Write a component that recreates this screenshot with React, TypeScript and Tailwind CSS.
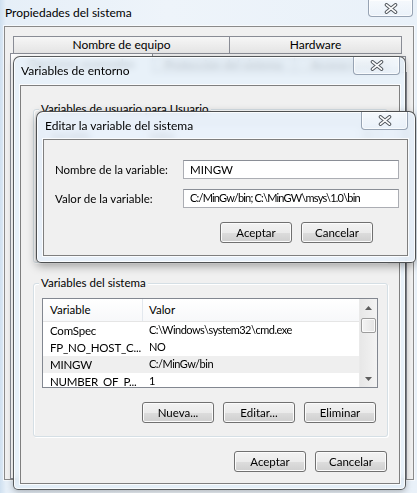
import React from "react";

function CloseGlyph() {
  return (
    <svg width="14" height="11" viewBox="0 0 14 11">
      <path d="M2.5 1.8 L11.5 9.2 M11.5 1.8 L2.5 9.2" stroke="#555a60" strokeWidth="3.6" strokeLinecap="round" fill="none" />
      <path d="M2.5 1.8 L11.5 9.2 M11.5 1.8 L2.5 9.2" stroke="#ffffff" strokeWidth="1.6" strokeLinecap="round" fill="none" />
    </svg>
  );
}

function CloseBtn({ className }: { className: string }) {
  return (
    <div
      className={
        "absolute flex items-center justify-center border border-t-0 border-[#97a3b3] rounded-b-[4px] bg-[linear-gradient(to_bottom,rgba(255,255,255,0.55),rgba(235,242,250,0.6))] shadow-[inset_0_0_0_1px_rgba(255,255,255,0.7)] " +
        className
      }
    >
      <CloseGlyph />
    </div>
  );
}

function Btn({ children }: { children: React.ReactNode }) {
  return (
    <div className="w-[72px] h-[21px] flex items-center justify-center rounded-[3px] border border-[#707070] bg-[linear-gradient(to_bottom,#f2f2f2_0%,#ebebeb_50%,#dddddd_51%,#cfcfcf_100%)] shadow-[inset_0_0_0_1px_#fbfbfb] text-[11.5px] leading-none text-black">
      {children}
    </div>
  );
}

function GroupBox({ label, children, className }: { label: string; children?: React.ReactNode; className?: string }) {
  return (
    <div className={"relative border border-[#d5dfe5] rounded-[3px] shadow-[inset_1px_1px_0_#ffffff,1px_1px_0_#ffffff] " + (className || "")}>
      <span className="absolute -top-[9px] left-[5px] px-[2px] bg-[#f0f0f0] leading-[16px] text-[11.5px] text-black">{label}</span>
      {children}
    </div>
  );
}

function ListView({ rows, selected, thumbTop }: { rows: [string, string][]; selected?: number; thumbTop: number }) {
  return (
    <div className="w-[336px] h-[90px] border border-[#828790] bg-white flex overflow-hidden">
      <div className="flex-1 flex flex-col overflow-hidden">
        <div className="h-[23px] shrink-0 flex items-center bg-[linear-gradient(to_bottom,#ffffff,#f7f8fa)] border-b border-[#e5e5e5] text-[11.5px]">
          <div className="w-[100px] h-full flex items-center pl-[7px] border-r border-[#e3e8ee]">Variable</div>
          <div className="flex-1 h-full flex items-center pl-[6px]">Valor</div>
        </div>
        {rows.map((r, i) => (
          <div key={i} className={"h-[17px] shrink-0 flex items-center text-[11.5px] " + (i === selected ? "bg-[#efefef]" : "")}>
            <div className="w-[100px] shrink-0 pl-[7px] whitespace-nowrap overflow-hidden tracking-[-0.2px]">{r[0]}</div>
            <div className="pl-[6px] whitespace-nowrap text-[11px] tracking-[-0.5px]">{r[1]}</div>
          </div>
        ))}
      </div>
      <div className="w-[18px] h-full bg-[linear-gradient(to_right,#e7e7e7,#f3f3f3)] border-l border-[#eaeaea] flex flex-col items-center">
        <div className="h-[17px] w-full flex items-center justify-center">
          <svg width="7" height="4" viewBox="0 0 7 4"><path d="M0 4 L3.5 0 L7 4 Z" fill="#5d5d5d" /></svg>
        </div>
        <div style={{ marginTop: thumbTop }} className="w-[15px] h-[15px] rounded-[2px] border border-[#9c9c9c] bg-[linear-gradient(to_right,#f3f3f3,#e4e4e4)] shadow-[inset_0_0_0_1px_#fafafa]" />
        <div className="flex-1" />
        <div className="h-[17px] w-full flex items-center justify-center">
          <svg width="7" height="4" viewBox="0 0 7 4"><path d="M0 0 L3.5 4 L7 0 Z" fill="#5d5d5d" /></svg>
        </div>
      </div>
    </div>
  );
}

export default function App() {
  return (
    <div className="relative w-[417px] h-[493px] overflow-hidden bg-[linear-gradient(to_right,#cfe0f0_0px,#e6eff8_6px,#eef4fa_40%,#e9f1f9_100%)] font-['Lato',sans-serif] text-[11.5px] text-black">
      {/* Outer window: Propiedades del sistema */}
      <div className="pl-[4px]">
        <div className="h-[26px] pl-[1px] pt-[5px] leading-[16px] text-[12px]">Propiedades del sistema</div>
        <div className="w-[410px] h-[454px] border border-[#8a8a8a] bg-[#f0f0f0] shadow-[0_0_0_1px_rgba(255,255,255,0.6)]">
          <div className="pt-[9px] pl-[8px] flex">
            <div className="w-[217px] h-[18px] flex items-center justify-center border border-[#898c95] bg-[linear-gradient(to_bottom,#f6f6f6,#e4e4e4)] text-[12px]">Nombre de equipo</div>
            <div className="-ml-px w-[173px] h-[18px] flex items-center justify-center border border-[#898c95] bg-[linear-gradient(to_bottom,#f6f6f6,#e4e4e4)] text-[12px]">Hardware</div>
          </div>
          <div className="-mt-px pl-[5px] flex items-start">
            <div className="w-[143px] h-[20px] flex items-center justify-center border border-b-0 border-[#898c95] bg-white text-[12px]">Opciones avanzadas</div>
            <div className="-ml-px mt-[3px] w-[143px] h-[17px] flex items-center justify-center border border-[#898c95] bg-[linear-gradient(to_bottom,#f6f6f6,#e4e4e4)] text-[12px]">Protección del sistema</div>
            <div className="-ml-px mt-[3px] w-[112px] h-[17px] flex items-center justify-center border border-[#898c95] bg-[linear-gradient(to_bottom,#f6f6f6,#e4e4e4)] text-[12px]">Acceso remoto</div>
          </div>
          <div className="-mt-px ml-[5px] w-[397px] h-[407px] border border-[#898c95] bg-white" />
        </div>
      </div>
      <CloseBtn className="left-[368px] top-0 w-[45px] h-[17px]" />

      {/* Variables de entorno */}
      <div className="absolute left-[13px] top-[56px] w-[393px] h-[434px] rounded-t-[7px] rounded-b-[5px] border border-[rgba(40,40,40,0.75)] bg-[rgba(226,237,248,0.8)] backdrop-blur-[3px] shadow-[inset_0_0_0_1px_rgba(255,255,255,0.75),0_2px_6px_rgba(0,0,0,0.25)] flex flex-col">
        <div className="h-[28px] shrink-0 pl-[7px] pt-[6px] leading-[16px] text-[12px]">Variables de entorno</div>
        <CloseBtn className="right-[5px] top-0 w-[47px] h-[18px]" />
        <div className="ml-[6px] mr-[5px] mb-[5px] flex-1 border border-[#7f7f7f] bg-[#f0f0f0] shadow-[0_0_0_1px_rgba(255,255,255,0.8)] flex flex-col">
          <GroupBox label="Variables de usuario para Usuario" className="mt-[23px] ml-[12px] w-[355px] h-[154px]">
            <div className="pt-[14px] pl-[8px]">
              <ListView rows={[["TEMP", "%USERPROFILE%\\AppData\\Local\\Temp"], ["TMP", "%USERPROFILE%\\AppData\\Local\\Temp"]]} thumbTop={0} />
            </div>
          </GroupBox>
          <GroupBox label="Variables del sistema" className="mt-[20px] ml-[12px] w-[355px] h-[154px]">
            <div className="pt-[14px] pl-[8px]">
              <ListView
                rows={[
                  ["ComSpec", "C:\\Windows\\system32\\cmd.exe"],
                  ["FP_NO_HOST_C...", "NO"],
                  ["MINGW", "C:/MinGw/bin"],
                  ["NUMBER_OF_P...", "1"],
                ]}
                selected={2}
                thumbTop={2}
              />
            </div>
            <div className="mt-[14px] pr-[11px] flex justify-end gap-[9px]">
              <Btn>Nueva...</Btn>
              <Btn>Editar...</Btn>
              <Btn>Eliminar</Btn>
            </div>
          </GroupBox>
          <div className="mt-[14px] pr-[12px] flex justify-end gap-[9px]">
            <Btn>Aceptar</Btn>
            <Btn>Cancelar</Btn>
          </div>
        </div>
      </div>

      {/* Editar la variable del sistema */}
      <div className="absolute left-[36px] top-[111px] w-[380px] h-[152px] rounded-t-[7px] rounded-b-[5px] border border-[rgba(40,40,40,0.8)] bg-[rgba(230,240,250,0.85)] backdrop-blur-[3px] shadow-[inset_0_0_0_1px_rgba(255,255,255,0.8),0_3px_10px_rgba(0,0,0,0.35)] flex flex-col">
        <div className="h-[27px] shrink-0 pl-[8px] pt-[6px] leading-[16px] text-[12px]">Editar la variable del sistema</div>
        <CloseBtn className="right-[7px] top-0 w-[47px] h-[18px]" />
        <div className="ml-[6px] mr-[7px] mb-[6px] flex-1 border border-[#7f7f7f] bg-[#f0f0f0] shadow-[0_0_0_1px_rgba(255,255,255,0.8)] pt-[20px] pl-[11px] pr-[7px] flex flex-col">
          <div className="flex items-center">
            <div className="w-[128px] shrink-0">Nombre de la variable:</div>
            <div className="w-[216px] shrink-0 h-[19px] border border-[#abadb3] border-t-[#8a8e96] bg-white flex items-center pl-[6px]">MINGW</div>
          </div>
          <div className="mt-[10px] flex items-center">
            <div className="w-[128px] shrink-0">Valor de la variable:</div>
            <div className="w-[216px] shrink-0 h-[19px] border border-[#abadb3] border-t-[#8a8e96] bg-white flex items-center pl-[6px] whitespace-nowrap overflow-hidden text-[11px] tracking-[-0.8px]">C:/MinGw/bin; C:\MinGW\msys\1.0\bin</div>
          </div>
          <div className="mt-[14px] mr-[27px] flex justify-end gap-[9px]">
            <Btn>Aceptar</Btn>
            <Btn>Cancelar</Btn>
          </div>
        </div>
      </div>
    </div>
  );
}
